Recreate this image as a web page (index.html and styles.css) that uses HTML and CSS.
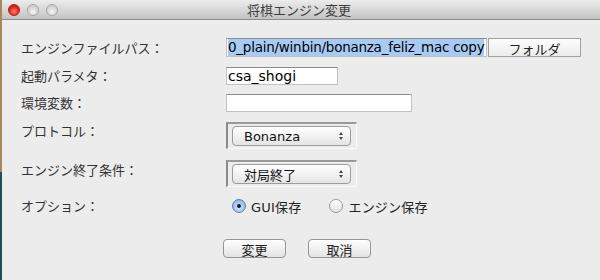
FILE: index.html
```html
<!DOCTYPE html>
<html lang="ja">
<head>
    <meta charset="UTF-8">
    <title>将棋エンジン変更</title>
    <link rel="stylesheet" href="styles.css">
</head>
<body>
    <div class="desktop"></div>
    <div class="window">
        <div class="titlebar">
            <div class="lights">
                <span class="light red"></span>
                <span class="light"></span>
                <span class="light"></span>
            </div>
            <div class="title">将棋エンジン変更</div>
        </div>

        <div class="content">
            <div class="row row-path">
                <label>エンジンファイルパス：</label>
                <div class="field field-path"><span class="selected">0_plain/winbin/bonanza_feliz_mac copy</span></div>
                <button class="folder-btn">フォルダ</button>
            </div>

            <div class="row row-param">
                <label>起動パラメタ：</label>
                <div class="field field-param">csa_shogi</div>
            </div>

            <div class="row row-env">
                <label>環境変数：</label>
                <div class="field field-env"></div>
            </div>

            <div class="row row-combo">
                <label>プロトコル：</label>
                <div class="combo-box">
                    <div class="popup">
                        <span>Bonanza</span>
                        <span class="arrows"><i class="up"></i><i class="down"></i></span>
                    </div>
                </div>
            </div>

            <div class="row row-combo row-end">
                <label>エンジン終了条件：</label>
                <div class="combo-box">
                    <div class="popup">
                        <span>対局終了</span>
                        <span class="arrows"><i class="up"></i><i class="down"></i></span>
                    </div>
                </div>
            </div>

            <div class="row row-option">
                <label>オプション：</label>
                <div class="radios">
                    <span class="radio checked"><span class="dot"></span></span>
                    <span class="radio-label">GUI保存</span>
                    <span class="radio"></span>
                    <span class="radio-label">エンジン保存</span>
                </div>
            </div>

            <div class="buttons">
                <button class="push">変更</button>
                <button class="push">取消</button>
            </div>
        </div>
    </div>
</body>
</html>
```

FILE: styles.css
```css
body {
    margin: 0;
    width: 600px;
    height: 280px;
    overflow: hidden;
    display: flex;
    font-family: "DejaVu Sans", "Noto Sans CJK JP", sans-serif;
    font-size: 13px;
    color: #1e1e1e;
    background-color: #ececec;
}
.desktop {
    width: 2px;
    flex-shrink: 0;
    background: linear-gradient(#a88a5a 0, #a88a5a 172px, #1f4f52 172px);
}
.window {
    flex: 1;
    background-color: #ececec;
}
.titlebar {
    height: 19px;
    border-bottom: 1px solid #8e8e8e;
    background: linear-gradient(#ececec, #d4d4d4 60%, #c2c2c2);
    display: flex;
    align-items: center;
}
.lights {
    display: flex;
    gap: 7px;
    margin-left: 6px;
}
.light {
    width: 12px;
    height: 12px;
    border-radius: 50%;
    box-sizing: border-box;
    border: 1px solid #a5a5a5;
    background: radial-gradient(circle at 50% 70%, #f4f4f4, #cfcfcf 70%);
}
.light.red {
    border-color: #a2231e;
    background: radial-gradient(circle at 50% 65%, #ff7f73, #e0211a 60%, #b3140f);
}
.title {
    flex: 1;
    text-align: center;
    margin-right: 60px;
    font-family: "Noto Sans CJK JP", sans-serif;
    color: #3e3e3e;
    font-size: 13px;
}
.content {
    padding: 18px 0 0 19px;
}
.row {
    display: flex;
    align-items: flex-start;
}
.row label {
    width: 205px;
    flex-shrink: 0;
    line-height: 18px;
    font-family: "Noto Sans CJK JP", sans-serif;
    color: #333;
}
.field {
    background-color: #fff;
    box-sizing: border-box;
    border: 1px solid #c2c2c2;
    border-top-color: #8c8c8c;
    font-size: 14px;
    line-height: 17px;
    padding-left: 1px;
    white-space: nowrap;
    overflow: hidden;
    color: #000;
}
.row-path {
    height: 19px;
}
.row-path label {
    padding-top: 1px;
}
.field-path {
    width: 261px;
    height: 19px;
    font-size: 13.5px;
}
.selected {
    background-color: #a8cbf6;
    display: inline-block;
    height: 17px;
    letter-spacing: -0.25px;
}
.folder-btn {
    width: 93px;
    height: 19px;
    margin-left: 1px;
    padding: 0;
    border: 1px solid #a0a0a0;
    border-radius: 0;
    background: linear-gradient(#fdfdfd, #ececec);
    font-family: "Noto Sans CJK JP", sans-serif;
    font-size: 13px;
    color: #222;
}
.row-param {
    margin-top: 10px;
    height: 18px;
}
.field-param {
    width: 112px;
    height: 18px;
}
.row-env {
    margin-top: 9px;
    height: 18px;
}
.field-env {
    width: 186px;
    height: 18px;
}
.row-combo {
    margin-top: 10px;
    height: 27px;
}
.row-end {
    margin-top: 11px;
}
.row-end label {
    padding-top: 1px;
}
.combo-box {
    width: 131px;
    height: 27px;
    box-sizing: border-box;
    border-top: 2px solid #9a9a9a;
    border-left: 2px solid #8a8a8a;
    border-right: 1px solid #fafafa;
    border-bottom: 1px solid #fafafa;
    padding: 2px 5px 0 4px;
}
.popup {
    height: 20px;
    box-sizing: border-box;
    border: 1px solid #9c9c9c;
    border-radius: 4px;
    background: linear-gradient(#ffffff, #f2f2f2 50%, #e4e4e4);
    display: flex;
    align-items: center;
    justify-content: space-between;
    padding: 0 7px 0 11px;
    font-family: "DejaVu Sans", "Noto Sans CJK JP", sans-serif;
    font-size: 13px;
    color: #111;
}
.arrows {
    display: flex;
    flex-direction: column;
    gap: 2px;
}
.arrows i {
    width: 0;
    height: 0;
    border-left: 2.5px solid transparent;
    border-right: 2.5px solid transparent;
}
.arrows .up {
    border-bottom: 3px solid #444;
}
.arrows .down {
    border-top: 3px solid #444;
}
.row-option {
    margin-top: 11px;
    height: 16px;
}
.row-option label {
    line-height: 16px;
}
.radios {
    display: flex;
    align-items: center;
    height: 16px;
    margin-left: 6px;
}
.radio {
    width: 14px;
    height: 14px;
    box-sizing: border-box;
    border-radius: 50%;
    border: 1px solid #9a9a9a;
    background: linear-gradient(#ffffff, #e2e2e2);
    display: flex;
    align-items: center;
    justify-content: center;
}
.radio.checked {
    border-color: #5a7fa8;
    background: radial-gradient(circle at 50% 60%, #d8ecfd, #8fbcec 70%, #6a9ad2);
}
.dot {
    width: 4px;
    height: 4px;
    border-radius: 50%;
    background-color: #1a1a1a;
}
.radio-label {
    margin-left: 5px;
    margin-right: 28px;
    font-family: "DejaVu Sans", "Noto Sans CJK JP", sans-serif;
    font-size: 13px;
    color: #222;
    letter-spacing: 0.2px;
}
.buttons {
    display: flex;
    gap: 22px;
    margin-top: 25px;
    margin-left: 202px;
}
.push {
    width: 63px;
    height: 19px;
    padding: 0;
    border: 1px solid #959595;
    border-radius: 4px;
    background: linear-gradient(#ffffff, #f1f1f1 50%, #e3e3e3);
    font-family: "Noto Sans CJK JP", sans-serif;
    font-size: 13px;
    color: #222;
}
```
